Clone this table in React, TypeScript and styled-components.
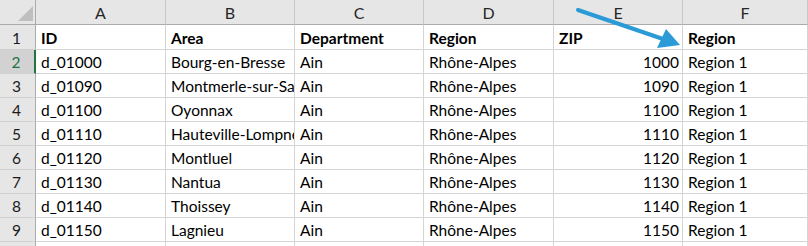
import styled, { createGlobalStyle } from 'styled-components';

const GlobalStyle = createGlobalStyle`
  html, body {
    margin: 0;
    padding: 0;
    background: #ffffff;
  }
  body {
    font-family: Lato, 'Open Sans', sans-serif;
  }
`;

const COLS = ['A', 'B', 'C', 'D', 'E', 'F'];
const COL_WIDTHS = '36px 130px 129px 129px 130px 129px 125px';

type Row = {
  id: string;
  area: string;
  dept: string;
  region: string;
  zip: number;
  bucket: string;
};

const rows: Row[] = [
  { id: 'd_01000', area: 'Bourg-en-Bresse', dept: 'Ain', region: 'Rhône-Alpes', zip: 1000, bucket: 'Region 1' },
  { id: 'd_01090', area: 'Montmerle-sur-Saône', dept: 'Ain', region: 'Rhône-Alpes', zip: 1090, bucket: 'Region 1' },
  { id: 'd_01100', area: 'Oyonnax', dept: 'Ain', region: 'Rhône-Alpes', zip: 1100, bucket: 'Region 1' },
  { id: 'd_01110', area: 'Hauteville-Lompnes', dept: 'Ain', region: 'Rhône-Alpes', zip: 1110, bucket: 'Region 1' },
  { id: 'd_01120', area: 'Montluel', dept: 'Ain', region: 'Rhône-Alpes', zip: 1120, bucket: 'Region 1' },
  { id: 'd_01130', area: 'Nantua', dept: 'Ain', region: 'Rhône-Alpes', zip: 1130, bucket: 'Region 1' },
  { id: 'd_01140', area: 'Thoissey', dept: 'Ain', region: 'Rhône-Alpes', zip: 1140, bucket: 'Region 1' },
  { id: 'd_01150', area: 'Lagnieu', dept: 'Ain', region: 'Rhône-Alpes', zip: 1150, bucket: 'Region 1' },
];

const Sheet = styled.div`
  position: relative;
  width: 808px;
  height: 246px;
  overflow: hidden;
  background: #fff;
`;

const Grid = styled.div`
  display: grid;
  grid-template-columns: ${COL_WIDTHS};
  grid-template-rows: 25px 25px;
  grid-auto-rows: 24px;
`;

const Corner = styled.div`
  position: relative;
  background: #e6e6e6;
  border-right: 1px solid #ababab;
  border-bottom: 1px solid #ababab;
  &::after {
    content: '';
    position: absolute;
    right: 2px;
    bottom: 3px;
    width: 0;
    height: 0;
    border-left: 15px solid transparent;
    border-bottom: 15px solid #bfbfbf;
  }
`;

const ColHead = styled.div`
  background: #e6e6e6;
  border-bottom: 1px solid #ababab;
  border-right: 1px solid #c9c9c9;
  display: flex;
  align-items: center;
  justify-content: center;
  font-size: 16px;
  color: #262626;
  padding-top: 1px;
`;

const RowHead = styled.div<{ $active?: boolean }>`
  background: ${p => (p.$active ? '#d2d2d2' : '#e6e6e6')};
  border-right: ${p => (p.$active ? '2px solid #217346' : '1px solid #ababab')};
  border-bottom: 1px solid #d0d0d0;
  display: flex;
  align-items: flex-end;
  justify-content: center;
  padding: 0 2px 2px 0;
  font-size: 15.5px;
  line-height: 18px;
  color: ${p => (p.$active ? '#217346' : '#1a1a1a')};
  box-sizing: border-box;
`;

const Cell = styled.div<{ $bold?: boolean; $num?: boolean }>`
  border-right: 1px solid #d4d4d4;
  border-bottom: 1px solid #d4d4d4;
  display: flex;
  align-items: flex-end;
  justify-content: ${p => (p.$num ? 'flex-end' : 'flex-start')};
  padding: 0 3px 2px 5px;
  font-size: 15.5px;
  line-height: 18px;
  font-weight: ${p => (p.$bold ? 700 : 400)};
  color: #000;
  white-space: nowrap;
  overflow: hidden;
  box-sizing: border-box;
  min-width: 0;
`;

const Arrow = styled.svg`
  position: absolute;
  left: 0;
  top: 0;
  pointer-events: none;
`;

export default function App() {
  return (
    <Sheet>
      <GlobalStyle />
      <Grid>
        <Corner />
        {COLS.map(c => (
          <ColHead key={c}>{c}</ColHead>
        ))}

        <RowHead>1</RowHead>
        <Cell $bold>ID</Cell>
        <Cell $bold>Area</Cell>
        <Cell $bold>Department</Cell>
        <Cell $bold>Region</Cell>
        <Cell $bold>ZIP</Cell>
        <Cell $bold>Region</Cell>

        {rows.map((r, i) => (
          <Row key={r.id} row={r} n={i + 2} />
        ))}

        <RowHead />
        {COLS.map(c => (
          <Cell key={c} />
        ))}
      </Grid>

      <Arrow width="808" height="246" viewBox="0 0 808 246">
        <line x1="578" y1="10" x2="663" y2="39" stroke="#2b9bd8" strokeWidth="4" strokeLinecap="round" />
        <polygon points="680,45 657,48 666,29" fill="#2b9bd8" />
      </Arrow>
    </Sheet>
  );
}

const Row = ({ row, n }: { row: Row; n: number }) => (
  <>
    <RowHead $active={n === 2}>{n}</RowHead>
    <Cell>{row.id}</Cell>
    <Cell>{row.area}</Cell>
    <Cell>{row.dept}</Cell>
    <Cell>{row.region}</Cell>
    <Cell $num>{row.zip}</Cell>
    <Cell>{row.bucket}</Cell>
  </>
);
